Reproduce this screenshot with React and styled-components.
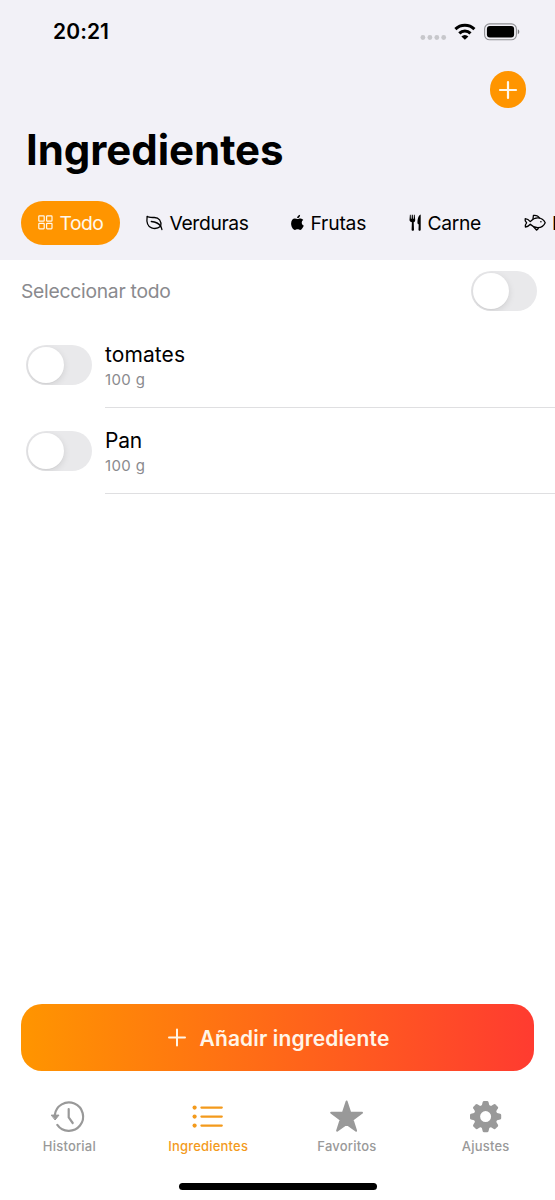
import React from "react";
import styled, { createGlobalStyle } from "styled-components";

const GlobalStyle = createGlobalStyle`
  *, *::before, *::after { box-sizing: border-box; }
  body { margin: 0; background: #fff; }
`;

const Screen = styled.div`
  width: 555px;
  height: 1200px;
  display: flex;
  flex-direction: column;
  overflow: hidden;
  background: #fff;
  color: #000;
  font-family: Inter, "Liberation Sans", sans-serif;
`;

const Header = styled.header`
  height: 260px;
  flex: none;
  display: flex;
  flex-direction: column;
  background: #f2f1f7;
`;

const StatusBar = styled.div`
  height: 63px;
  padding: 0 35px 0 53px;
  display: flex;
  align-items: center;
  justify-content: space-between;
`;

const Text = styled.span`
  display: block;
  white-space: nowrap;
  font-size: ${(p) => p.$size}px;
  font-weight: ${(p) => p.$weight || 400};
  line-height: ${(p) => p.$line || p.$size + 6}px;
  letter-spacing: ${(p) => p.$track || 0}px;
  padding-top: ${(p) => p.$drop || 0}px;
  color: ${(p) => p.$color || "inherit"};
`;

const Icon = styled.svg`
  display: block;
  flex: none;
  overflow: visible;
`;

const NavBar = styled.div`
  height: 54px;
  padding: 8.4px 29px 0 0;
  display: flex;
  justify-content: flex-end;
`;

const AddButton = styled.button`
  width: 36.5px;
  height: 36.5px;
  padding: 0;
  border: 0;
  border-radius: 50%;
  background: #ff9500;
  color: #fff8ec;
  display: grid;
  place-items: center;
`;

const Title = styled.h1`
  margin: 4px 0 0 26px;
  height: 58px;
  font-size: 42px;
  font-weight: 700;
  line-height: 58px;
  letter-spacing: -0.05px;
`;

const Chips = styled.nav`
  margin-top: 22px;
  padding-left: 21px;
  display: flex;
  gap: 10px;
`;

const Chip = styled.div`
  flex: none;
  width: ${(p) => p.$width}px;
  height: 43.5px;
  padding-left: 16.5px;
  border-radius: 22px;
  display: flex;
  align-items: center;
  gap: ${(p) => p.$gap}px;
  background: ${(p) => (p.$active ? "#ff9500" : "transparent")};
  color: ${(p) => (p.$active ? "#fff8ec" : "#000")};
`;

const SelectAll = styled.div`
  height: 62px;
  flex: none;
  padding: 0 18px 0 21px;
  display: flex;
  align-items: center;
  justify-content: space-between;
`;

const Track = styled.div`
  width: 66px;
  height: 40px;
  flex: none;
  padding: 2px;
  border-radius: 20px;
  background: #e9e9eb;
  overflow: hidden;
`;

const Knob = styled.div`
  width: 36px;
  height: 36px;
  border-radius: 50%;
  background: #fff;
  box-shadow: 0 2px 7px rgba(0, 0, 0, 0.11), 0 1px 1px rgba(0, 0, 0, 0.03);
`;

const List = styled.main`
  flex: 1;
`;

const Row = styled.div`
  height: 86.2px;
  padding-left: 26px;
  display: flex;
  gap: 13px;
`;

const RowToggle = styled.div`
  padding-top: 23px;
`;

const RowBody = styled.div`
  flex: 1;
  padding-top: 19px;
  border-bottom: 1px solid #dfdfe1;
`;

const PrimaryButton = styled.button`
  margin: 0 21px;
  height: 67.5px;
  flex: none;
  padding: 0 0 0 2px;
  border: 0;
  border-radius: 21px;
  background: linear-gradient(90deg, #ff9500, #ff3b30);
  color: #fff5e8;
  font-family: inherit;
  display: flex;
  align-items: center;
  justify-content: center;
  gap: 14px;
`;

const TabBar = styled.nav`
  height: 112px;
  flex: none;
  padding: 27.5px 0 0;
  display: flex;
`;

const Tab = styled.div`
  flex: 1;
  display: flex;
  flex-direction: column;
  align-items: center;
  gap: 2.5px;
  color: ${(p) => (p.$active ? "#f39a1c" : "#999")};
`;

const HomeIndicator = styled.div`
  width: 198px;
  height: 6.5px;
  flex: none;
  margin: 0 auto 10.5px;
  border-radius: 4px;
  background: #000;
`;

const StatusIcons = () => (
  <Icon width="100" height="20" viewBox="420 21.5 100 20">
    <g fill="#c7c7cb">
      <circle cx="422.9" cy="37" r="2.4" />
      <circle cx="429.9" cy="37" r="2.4" />
      <circle cx="436.8" cy="37" r="2.4" />
      <circle cx="443.7" cy="37" r="2.4" />
    </g>
    <g fill="none" stroke="#000" strokeWidth="3">
      <path d="M455.4 28.6a13.5 13.5 0 0 1 19 0" />
      <path d="M459.3 32.9a8 8 0 0 1 11.2 0" />
    </g>
    <path d="M461.4 35.9a4.8 4.8 0 0 1 7 0L464.9 39.3z" fill="#000" />
    <rect x="484.6" y="23.4" width="31.8" height="15.9" rx="5" fill="none" stroke="#8f8f93" strokeWidth="1.1" />
    <rect x="486.9" y="25.6" width="27.2" height="11.5" rx="3" fill="#000" />
    <path d="M517.8 28.8c2 .8 2 4.2 0 5z" fill="#77777b" />
  </Icon>
);

const GridIcon = () => (
  <Icon width="15" height="15" viewBox="0 0 15 15" fill="none" stroke="currentColor" strokeWidth="1.2">
    <rect x=".8" y=".8" width="5.4" height="5.4" rx=".7" />
    <rect x="8.6" y=".8" width="5.4" height="5.4" rx=".7" />
    <rect x=".8" y="8.4" width="5.4" height="5.4" rx=".7" />
    <rect x="8.6" y="8.4" width="5.4" height="5.4" rx=".7" />
  </Icon>
);

const LeafIcon = () => (
  <Icon width="17" height="16" viewBox="0 0 17 16" fill="none" stroke="currentColor" strokeWidth="1.3" strokeLinecap="round" strokeLinejoin="round">
    <path d="M1.1 1.3C2.400 2.700 4.600 2.500 8.400 2.500c4.400.1 7.400 3.300 6.300 8.800C12.600 13 8.900 14.100 5.600 12.900 1.700 11.500.4 6.700 1.100 1.300z" />
    <path d="M5.300 6.500c3.800.3 7.300 1.400 9.400 4.800.5.800 1 1.700 1.200 3.200" />
  </Icon>
);

const AppleIcon = () => (
  <Icon width="13" height="17" viewBox="0 0 13 17" fill="currentColor">
    <path d="M9.1.7c.1 1.9-1.3 3.400-3 3.400C6 2.500 7.400.9 9.100.7z" />
    <path d="M6.5 5C7.500 5 8.300 4.300 9.600 4.400c1.100.1 2.100.6 2.700 1.500-2.300 1.400-1.900 4.600.5 5.700-.7 1.900-2 4.300-3.500 4.300-1.100 0-1.500-.7-2.700-.7s-1.700.7-2.700.7C2 15.900.1 12.600.1 9.500c0-3.100 1.800-5 3.700-5 1.100 0 1.900.5 2.700.5z" />
  </Icon>
);

const ForkIcon = () => (
  <Icon width="12" height="18" viewBox="-.4 .2 12 18" fill="currentColor">
    <path d="M.5.9h.8l.2 4h.7L2.400.9h1l.2 4h.7l.2-4h.8l.5 5.200c.1 1.100-.6 1.900-1.500 2.300l.3 7.600c0 1.400-2.400 1.400-2.400 0l.3-7.600C1.400 8 0 7.200.1 6.100z" />
    <path d="M11.3.8v15.100c0 1.400-2.200 1.400-2.200 0l.2-5.200-1.200-.9C8 5.900 8.700 1.900 11.300.8z" />
  </Icon>
);

const FishIcon = () => (
  <Icon width="22" height="17" viewBox="0 -.3 22 17" fill="none" stroke="currentColor" strokeWidth="1.3" strokeLinecap="round" strokeLinejoin="round">
    <path d="M6.3 7.300C8.700 4.700 11.300 3.500 14 3.600c3.200.1 5.900 2.100 7.200 4.900-1.300 2.900-4 4.800-7.200 4.900-2.700.1-5.300-1.100-7.700-3.500-1.300 1.500-2.800 2.600-4.900 2.800-.5-1.700.2-3 1.200-4.200C1.400 7.400.7 6.100 1.200 4.300c2.100.2 3.800 1.400 5.100 3z" />
    <path d="M9 4.600 9.400 1.200c3.200-.4 5 .7 6.100 2.500M10 13l2.500 2.900c1-.5 1.600-1.300 2-2.500" />
    <circle cx="16.9" cy="7.5" r=".8" fill="currentColor" stroke="none" />
  </Icon>
);

const PlusIcon = ({ size, weight, shift = 0 }) => (
  <Icon width={size} height={size} viewBox={`0 ${-shift} ${size} ${size}`} fill="none" stroke="currentColor" strokeWidth={weight} strokeLinecap="round">
    <path d={`M${size / 2} 1V${size - 1}M1 ${size / 2}H${size - 1}`} />
  </Icon>
);

const HistoryIcon = () => (
  <Icon width="36" height="36" viewBox="-18 -18 36 36" fill="none" stroke="currentColor" strokeWidth="2.2" strokeLinecap="round" strokeLinejoin="round">
    <path d="M-14.2-2A14.200 14.200 0 1 1-11.700 7.800" />
    <path d="M-.3-8V.4L3.700 6" />
    <path d="M-17.400-1.900h7.400L-13.700 2.700z" fill="currentColor" strokeWidth="1" />
  </Icon>
);

const ListIcon = () => (
  <Icon width="36" height="36" viewBox="-18 -18 36 36" fill="none" stroke="currentColor" strokeWidth="2.2" strokeLinecap="round">
    {[-9.4, -0.4, 8.6].map((y) => (
      <g key={y}>
        <circle cx="-13.4" cy={y} r="2.1" fill="currentColor" stroke="none" />
        <path d={`M-6.600 ${y}H13.800`} />
      </g>
    ))}
  </Icon>
);

const StarIcon = () => (
  <Icon width="36" height="36" viewBox="-17.6 -18 36 36" fill="currentColor" stroke="currentColor" strokeWidth="2" strokeLinejoin="round">
    <path d="M0-15.5 3.700-4.300H15.400L6 2.700 9.500 13.700 0 6.900-9.500 13.700-6 2.700-15.400-4.300H-3.700z" />
  </Icon>
);

const GearIcon = () => (
  <Icon width="36" height="36" viewBox="-17.600 -17.600 36 36">
    <g fill="currentColor">
      {[0, 45, 90, 135, 180, 225, 270, 315].map((a) => (
        <path key={a} transform={`rotate(${a})`} d="M-4.200-9.500-2.900-14.600Q-2.600-15.600-1.600-15.600H1.600Q2.600-15.600 2.900-14.600L4.200-9.500z" />
      ))}
    </g>
    <circle r="8.7" fill="none" stroke="currentColor" strokeWidth="6.4" />
  </Icon>
);

const Toggle = () => (
  <Track role="switch" aria-checked="false">
    <Knob />
  </Track>
);

const categories = [
  { label: "Todo", icon: GridIcon, width: 98.5, gap: 7, track: -0.5, active: true },
  { label: "Verduras", icon: LeafIcon, width: 135, gap: 6.5, track: -0.35 },
  { label: "Frutas", icon: AppleIcon, width: 108, gap: 6.5, track: -0.2 },
  { label: "Carne", icon: ForkIcon, width: 105, gap: 6.5, track: -0.35 },
  { label: "Pescado", icon: FishIcon, width: 140, gap: 6, track: -0.3 },
];

const ingredients = [
  { name: "tomates", amount: "100 g", track: 0.1 },
  { name: "Pan", amount: "100 g", track: -0.2 },
];

const tabs = [
  { label: "Historial", icon: HistoryIcon },
  { label: "Ingredientes", icon: ListIcon, active: true },
  { label: "Favoritos", icon: StarIcon },
  { label: "Ajustes", icon: GearIcon },
];

export default function App() {
  return (
    <Screen>
      <GlobalStyle />
      <Header>
        <StatusBar>
          <Text $size={21} $weight={600} $track={0.1}>20:21</Text>
          <StatusIcons />
        </StatusBar>
        <NavBar>
          <AddButton aria-label="Añadir">
            <PlusIcon size={18} weight={2.2} />
          </AddButton>
        </NavBar>
        <Title>Ingredientes</Title>
        <Chips>
          {categories.map(({ label, icon: Glyph, width, gap, track, active }) => (
            <Chip key={label} $width={width} $gap={gap} $active={active}>
              <Glyph />
              <Text $size={19.3} $track={track} $drop={2}>{label}</Text>
            </Chip>
          ))}
        </Chips>
      </Header>
      <SelectAll>
        <Text $size={19.3} $track={-0.26} $drop={1.5} $color="#8a8a8e">Seleccionar todo</Text>
        <Toggle />
      </SelectAll>
      <List>
        {ingredients.map(({ name, amount, track }) => (
          <Row key={name}>
            <RowToggle><Toggle /></RowToggle>
            <RowBody>
              <Text $size={21} $line={27} $track={track}>{name}</Text>
              <Text $size={15} $line={22} $track={0.35} $drop={0.7} $color="#8a8a8e">{amount}</Text>
            </RowBody>
          </Row>
        ))}
      </List>
      <PrimaryButton>
        <PlusIcon size={18} weight={2} shift={0.6} />
        <Text $size={21} $weight={600} $track={0.12} $drop={1.5}>Añadir ingrediente</Text>
      </PrimaryButton>
      <TabBar>
        {tabs.map(({ label, icon: Glyph, active }) => (
          <Tab key={label} $active={active}>
            <Glyph />
            <Text $size={13} $weight={500} $track={0.2}>{label}</Text>
          </Tab>
        ))}
      </TabBar>
      <HomeIndicator />
    </Screen>
  );
}
